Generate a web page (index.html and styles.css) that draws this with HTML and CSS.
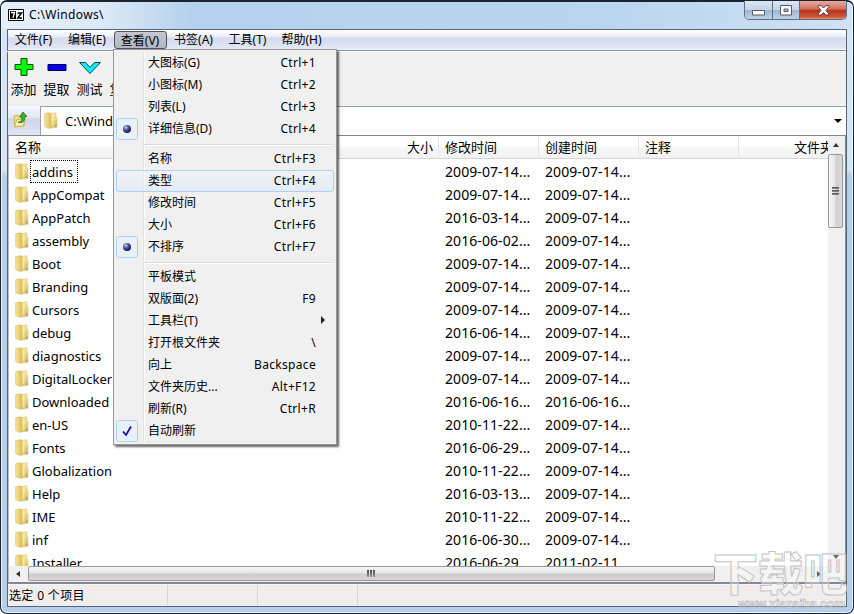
FILE: index.html
```
<!DOCTYPE html>
<html lang="zh-CN">

<head>
    <meta charset="UTF-8">
    <meta name="viewport" content="width=device-width, initial-scale=1.0">
    <title>C:\Windows\</title>
    <link rel="stylesheet" href="styles.css">
</head>

<body>
    <!-- shared icons -->
    <svg class="defs" width="0" height="0">
        <defs>
            <linearGradient id="gFront" x1="0" y1="0" x2="1" y2="0">
                <stop offset="0" stop-color="#f7e7a0" />
                <stop offset="1" stop-color="#dfbc50" />
            </linearGradient>
            <linearGradient id="gBack" x1="0" y1="0" x2="0" y2="1">
                <stop offset="0" stop-color="#f6eaa9" />
                <stop offset="1" stop-color="#d9b84c" />
            </linearGradient>
            <radialGradient id="gDot" cx=".35" cy=".3" r=".7">
                <stop offset="0" stop-color="#c9cdf5" />
                <stop offset=".5" stop-color="#4a4fa0" />
                <stop offset="1" stop-color="#15174f" />
            </radialGradient>
            <symbol id="folder" viewBox="0 0 14 17">
                <path d="M6 1.500 12 .8V5l1 1v9.300L6 16z" fill="url(#gBack)" stroke="#d8c47a" stroke-width=".6" />
                <path d="M.7 1.800 5 .7 6.800 1.500V15.800L5 16.500.7 14.500z" fill="url(#gFront)" stroke="#d5bb62" stroke-width=".6" />
                <path d="M7.500 3.500h2v11h-2z" fill="#fdf6cf" opacity=".6" />
                <path d="M11.900 12.500v2.500" stroke="#62a8c8" />
            </symbol>
        </defs>
    </svg>

    <div class="window">
        <div class="titlebar">
            <svg class="app-icon" width="16" height="12" viewBox="0 0 16 12">
                <path d="M.5.5h15v11H.5z" fill="#fff" stroke="#000" />
                <path d="M2 2h6v8H2z" fill="#000" />
                <path d="M3 3.500h3.500L5 9" fill="none" stroke="#fff" stroke-width="1.300" />
                <path d="M9.500 4h4L9.800 9H14" fill="none" stroke="#000" stroke-width="1.500" />
            </svg>
            <span class="title">C:\Windows\</span>
            <div class="win-buttons">
                <div class="win-btn min">
                    <svg width="13" height="6" viewBox="0 0 13 6"><path d="M.5.5h12v4.500H.5z" fill="#fff" stroke="#545b6b" /></svg>
                </div>
                <div class="win-btn max">
                    <svg width="12" height="11" viewBox="0 0 12 11"><path d="M.5.5h11v9.500H.5zM4 4v2.500h4V4z" fill="#fff" fill-rule="evenodd" stroke="#545b6b" /></svg>
                </div>
                <div class="win-btn close">
                    <svg width="13" height="11" viewBox="0 0 13 11"><path d="M1 .7h3.200L6.500 3 8.800.7H12v1L9 5.300l3 3.700v1H8.800L6.500 7.600 4.200 10H1V9l3-3.700L1 1.700z" fill="#fff" stroke="#6b3b40" /></svg>
                </div>
            </div>
        </div>

        <div class="client">
            <div class="menubar">
                <span class="menu">文件(F)</span>
                <span class="menu">编辑(E)</span>
                <span class="menu open">查看(V)</span>
                <span class="menu">书签(A)</span>
                <span class="menu">工具(T)</span>
                <span class="menu">帮助(H)</span>
            </div>

            <div class="toolbar">
                <div class="tool">
                    <svg width="22" height="22" viewBox="0 0 22 22"><path d="M8 2.500h6v6h6v5h-6v6H8v-6H2v-5h6z" fill="#00ff00" stroke="#004d00" /></svg>
                    <span>添加</span>
                </div>
                <div class="tool">
                    <svg width="22" height="22" viewBox="0 0 22 22"><path d="M2 8.500h18v6H2z" fill="#0000f0" stroke="#00004d" /></svg>
                    <span>提取</span>
                </div>
                <div class="tool">
                    <svg width="24" height="22" viewBox="0 0 24 22"><path d="M1.500 6.500h6l4.500 5 4.500-5h6L12 17.500z" fill="#00f4ff" stroke="#00464a" /></svg>
                    <span>测试</span>
                </div>
                <div class="tool"><span>复制</span></div>
            </div>

            <div class="address">
                <div class="up-button">
                    <svg width="16" height="17" viewBox="0 0 16 17">
                        <path d="M1 5l4-1 1 1.500h5V15L2 16z" fill="#f5df88" stroke="#c9a53c" stroke-width=".8" />
                        <path d="M1.500 15.500 4 8.500l8-1-1.500 7.500z" fill="#fbefb2" stroke="#c9a53c" stroke-width=".8" />
                        <path d="M5 11c3.500 0 4-2 3.800-5H6.500L10 1l4 4.500h-2.200C12 10 10 13 5 11z" fill="#3cb22e" stroke="#1c7a1a" stroke-width=".8" />
                    </svg>
                </div>
                <div class="combo">
                    <svg class="folder" width="14" height="17"><use href="#folder" /></svg>
                    <span>C:\Windows\</span>
                    <i class="arrow down big"></i>
                </div>
            </div>

            <div class="list">
                <div class="list-view">
                    <div class="row head">
                        <span>名称</span>
                        <span class="right">大小</span>
                        <span>修改时间</span>
                        <span>创建时间</span>
                        <span>注释</span>
                        <span class="right">文件夹</span>
                    </div>
                    <div class="rows" id="rows"></div>
                </div>
                <div class="vscroll">
                    <i class="arrow up"></i>
                    <div class="thumb"><i></i><i></i><i></i></div>
                    <i class="arrow down"></i>
                </div>
                <div class="hscroll">
                    <i class="arrow left"></i>
                    <div class="thumb"><i></i><i></i><i></i></div>
                    <i class="arrow next"></i>
                </div>
            </div>

            <div class="status">
                <span>选定 0 个项目</span>
                <span></span>
                <span></span>
                <span></span>
            </div>
        </div>
    </div>

    <div class="popup" id="popup"></div>

    <div class="watermark">
        <div class="wm-name">下载吧</div>
        <div class="wm-url">www.xiazaiba.com</div>
    </div>

    <script>
        // name, modified, created
        const FILES = [
            ['addins', '2009-07-14', '2009-07-14'],
            ['AppCompat', '2009-07-14', '2009-07-14'],
            ['AppPatch', '2016-03-14', '2009-07-14'],
            ['assembly', '2016-06-02', '2009-07-14'],
            ['Boot', '2009-07-14', '2009-07-14'],
            ['Branding', '2009-07-14', '2009-07-14'],
            ['Cursors', '2009-07-14', '2009-07-14'],
            ['debug', '2016-06-14', '2009-07-14'],
            ['diagnostics', '2009-07-14', '2009-07-14'],
            ['DigitalLocker', '2009-07-14', '2009-07-14'],
            ['Downloaded', '2016-06-16', '2016-06-16'],
            ['en-US', '2010-11-22', '2009-07-14'],
            ['Fonts', '2016-06-29', '2009-07-14'],
            ['Globalization', '2010-11-22', '2009-07-14'],
            ['Help', '2016-03-13', '2009-07-14'],
            ['IME', '2010-11-22', '2009-07-14'],
            ['inf', '2016-06-30', '2009-07-14'],
            ['Installer', '2016-06-29', '2011-02-11']
        ];
        // label, shortcut, mark; null is a separator
        const MENU = [
            ['大图标(G)', 'Ctrl+1'],
            ['小图标(M)', 'Ctrl+2'],
            ['列表(L)', 'Ctrl+3'],
            ['详细信息(D)', 'Ctrl+4', 'dot'],
            null,
            ['名称', 'Ctrl+F3'],
            ['类型', 'Ctrl+F4', 'hover'],
            ['修改时间', 'Ctrl+F5'],
            ['大小', 'Ctrl+F6'],
            ['不排序', 'Ctrl+F7', 'dot'],
            null,
            ['平板模式', ''],
            ['双版面(2)', 'F9'],
            ['工具栏(T)', '', 'sub'],
            ['打开根文件夹', '\\'],
            ['向上', 'Backspace'],
            ['文件夹历史...', 'Alt+F12'],
            ['刷新(R)', 'Ctrl+R'],
            ['自动刷新', '', 'check']
        ];
        const MARKS = {
            dot: '<b class="mark"><svg width="10" height="10"><circle cx="5" cy="5" r="4" fill="url(#gDot)"/></svg></b>',
            check: '<b class="mark"><svg width="12" height="12"><path d="M2 6.500 5 10 10 1.500" fill="none" stroke="#14149a" stroke-width="1.800"/></svg></b>',
            sub: '<i class="arrow next"></i>'
        };

        document.getElementById('rows').innerHTML = FILES.map((f, i) => `
            <div class="row">
                <span class="name"><svg class="folder" width="14" height="17"><use href="#folder"/></svg><em class="${i ? '' : 'focus'}">${f[0]}</em></span>
                <span></span>
                <span>${f[1]}...</span>
                <span>${f[2]}...</span>
            </div>`).join('');

        document.getElementById('popup').innerHTML = MENU.map(m => m
            ? `<div class="item ${m[2] || ''}">${MARKS[m[2]] || ''}<span>${m[0]}</span><kbd>${m[1]}</kbd></div>`
            : '<div class="sep"></div>').join('');
    </script>
</body>

</html>
```
FILE: styles.css
```
* {
    box-sizing: border-box;
}

body {
    margin: 0;
    background: #fff;
    font-family: "Noto Sans", "Noto Sans CJK SC", sans-serif;
    font-size: 12px;
    color: #000;
    overflow: hidden;
}

.defs {
    position: absolute;
}

.window {
    width: 854px;
    height: 614px;
    padding: 0 6px 6px;
    display: flex;
    flex-direction: column;
    border: 1px solid #1b2530;
    border-top-width: 2px;
    border-radius: 7px;
    background: linear-gradient(#d5e6f6 0, #d3e4f5 168px, #b4cfea 174px, #b5d0ed 100%);
    box-shadow: inset 0 0 0 1px #e9f4fd;
}

/* title bar */
.titlebar {
    display: flex;
    height: 27px;
    margin: 0 -5px;
    padding-left: 6px;
    border-radius: 5px 5px 0 0;
    background: linear-gradient(90deg, #e6f0fa 0, #dce9f6 100px, #b5d1ed 190px, #bad5ef 600px, #cfe1f3 100%);
}

.app-icon {
    margin: 7px 5px 0 0;
}

.title {
    line-height: 26px;
    letter-spacing: .35px;
}

.win-buttons {
    display: flex;
    height: 19px;
    margin: -1px 5px 0 auto;
    border: 1px solid #5f6f84;
    border-top: 0;
    border-radius: 0 0 5px 5px;
    overflow: hidden;
}

.win-btn {
    display: flex;
    align-items: center;
    justify-content: center;
    width: 28px;
    background: linear-gradient(#dce8f4, #c3d3e4 48%, #9fb4ca 50%, #bdd2e7);
    border-right: 1px solid #5f6f84;
}

.win-btn.min {
    padding-top: 5px;
}

.win-btn.max {
    width: 27px;
}

.win-btn.close {
    width: 46px;
    border-right: 0;
    background: linear-gradient(#e9a99c, #d0705f 46%, #b5301d 50%, #cf5a3a 90%, #e39a76);
}

/* client area */
.client {
    flex: 1;
    display: flex;
    flex-direction: column;
    min-height: 0;
    border: 1px solid #56667a;
    background: #f0f0f0;
}

.menubar {
    display: flex;
    flex: none;
    height: 21px;
    border-bottom: 1px solid #8f949c;
    background: linear-gradient(#fff, #eef1f9 30%, #d5daee 42%, #e2e6f5 90%, #f5f6fb);
}

.menu {
    width: 53px;
    margin-top: 1px;
    height: 18px;
    line-height: 18px;
    text-align: center;
    white-space: nowrap;
}

.menu:first-child {
    text-indent: -2px;
}

.menu:nth-child(2) {
    text-indent: -1px;
}

.menu:nth-child(n+4) {
    width: 54px;
    text-indent: -1px;
}

.menu.open {
    height: 18px;
    line-height: 17px;
    text-indent: -1px;
    border: 1px solid #4f5560;
    border-radius: 3px;
    background: linear-gradient(#c5c8d1, #b3b7c3);
}

.toolbar {
    display: flex;
    flex: none;
    height: 55px;
    margin-left: -1px;
    border-top: 1px solid #fff;
}

.tool {
    width: 33px;
    padding-top: 4px;
    display: flex;
    flex-direction: column;
    align-items: center;
    justify-content: space-between;
    height: 46px;
    white-space: nowrap;
    font-size: 13px;
    line-height: 18px;
}

.tool:last-child {
    justify-content: flex-end;
}

.address {
    display: flex;
    flex: none;
    height: 29px;
}

.up-button {
    width: 32px;
    padding: 5px 0 0 5px;
    background: linear-gradient(#f6f8fc, #e1e6f4 40%, #cfd6eb 45%, #e0e4f3);
}

.combo {
    flex: 1;
    display: flex;
    align-items: center;
    padding: 0 4px;
    border: 1px solid #9a9fa8;
    border-width: 1px 0 0 1px;
    background: #fff;
    font-size: 13px;
}

.combo .folder {
    margin: -1px 0 0 -1px;
}

.combo span {
    margin-left: 7px;
}

.combo .arrow {
    margin-left: auto;
}

/* small triangles */
.arrow {
    width: 0;
    height: 0;
    flex: none;
    border: 3px solid transparent;
}

.arrow.up {
    border-bottom: 4px solid #333;
    border-top: 0;
}

.arrow.down {
    border-top: 4px solid #333;
    border-bottom: 0;
}

.arrow.down.big {
    border-width: 4px 4px 0;
    border-top-color: #000;
}

.arrow.left {
    border-right: 4px solid #333;
    border-left: 0;
}

.arrow.next {
    border-left: 4px solid #222;
    border-right: 0;
}

/* file list */
.list {
    display: grid;
    grid-template-columns: 1fr 17px;
    grid-template-rows: 430px 16px;
    flex: none;
    height: 449px;
    border: 1px solid #828790;
    border-width: 1px 1px 2px;
    border-left-color: #b9bcc2;
    background: #fff;
}

.list-view {
    overflow: hidden;
}

.row {
    display: grid;
    height: 23px;
    line-height: 22px;
    font-size: 14px;
    letter-spacing: .08px;
    white-space: nowrap;
}

.rows .row {
    grid-template-columns: 330px 100px 100px 100px;
}

.rows {
    padding-top: 2px;
}

.row > span {
    padding-left: 6px;
}

.row.head {
    grid-template-columns: 330px 100px 100px 100px 100px 100px;
    height: 23px;
    line-height: 23px;
    font-size: 13px;
    letter-spacing: 0;
    border-bottom: 1px solid #d5d5d5;
    background: linear-gradient(#fff 45%, #f5f6f8 55%, #f1f2f4);
}

.row.head > span {
    border-right: 1px solid #e2e3ea;
}

.row.head .right {
    text-align: right;
    padding-right: 5px;
}

.row .name {
    display: flex;
}

.row .folder {
    margin: 2px 1px 0 0;
}

.row em {
    height: 23px;
    padding: 0 2px;
    font-style: normal;
    font-size: 13px;
    letter-spacing: 0;
}

.row em.focus {
    margin-top: -1px;
    padding: 0 4px 0 1px;
    border: 1px dotted #000;
}

.vscroll {
    display: flex;
    flex-direction: column;
    align-items: center;
    padding: 7px 2px 7px 0;
    background: #f0f0f0;
}

.vscroll .arrow.down {
    margin-top: auto;
}

.vscroll .thumb {
    width: 15px;
    height: 74px;
    margin-top: 7px;
    flex-direction: column;
    background: linear-gradient(90deg, #f6f6f6, #e6e6e6 48%, #cfcfcf 52%, #dadada);
}

.thumb {
    display: flex;
    flex: none;
    align-items: center;
    justify-content: center;
    gap: 1px;
    border: 1px solid #979797;
    border-radius: 2px;
}

.thumb i {
    background: linear-gradient(#444, #999);
}

.vscroll .thumb i {
    width: 7px;
    height: 2px;
}

.hscroll {
    grid-column: 1 / 3;
    display: flex;
    align-items: center;
    padding: 0 24px 1px 7px;
    background: #f0f0f0;
}

.hscroll .thumb {
    width: 687px;
    height: 15px;
    margin-left: 8px;
    padding-right: 2px;
    background: linear-gradient(#f6f6f6, #e4e4e4 48%, #cdcdcd 52%, #d6d6d6);
}

.hscroll .thumb i {
    width: 2px;
    height: 7px;
}

.hscroll .arrow.next {
    margin-left: auto;
}

.status {
    display: flex;
    flex: 1;
    border-top: 1px solid #f8f6f6;
    background: #f1eded;
}

.status span {
    width: 90px;
    height: 20px;
    line-height: 21px;
    letter-spacing: .35px;
    border-right: 1px solid #d7d3d3;
}

.status span:first-child {
    width: 160px;
    padding-left: 1px;
}

.status span:nth-child(3) {
    width: 100px;
}

.status span:last-child {
    border: 0;
}

/* open menu, lies over the window */
.popup {
    position: absolute;
    left: 113px;
    top: 49px;
    width: 224px;
    height: 396px;
    padding: 2px;
    border: 1px solid #979797;
    background: linear-gradient(90deg, #f0f0f0 27px, #e2e3e3 27px, #e2e3e3 28px, #fff 28px, #fff 29px, #f0f0f0 29px) 2px 2px / 218px 390px no-repeat #f0f0f0;
    box-shadow: 2px 2px 2px rgba(0, 0, 0, .6);
}

.item {
    position: relative;
    display: flex;
    justify-content: space-between;
    height: 22px;
    padding: 0 18px 0 32px;
    line-height: 21px;
}

.item kbd {
    font: inherit;
    letter-spacing: .32px;
}

.item.hover {
    padding: 0 17px 0 31px;
    line-height: 19px;
    border: 1px solid #aecff7;
    border-radius: 3px;
    background: linear-gradient(rgba(240, 244, 250, .6), rgba(222, 233, 248, .6));
}

.item .arrow {
    position: absolute;
    right: 9px;
    top: 6px;
    border-width: 4px 0 4px 4px;
}

.mark {
    position: absolute;
    left: 0;
    top: 0;
    width: 22px;
    height: 22px;
    display: flex;
    align-items: center;
    justify-content: center;
    border: 1px solid #aecff7;
    border-radius: 3px;
    background: #e9f0f9;
}

.sep {
    height: 8px;
    margin-left: 28px;
    background: linear-gradient(transparent 4px, #dcdcdc 4px, #dcdcdc 5px, #fff 5px, #fff 6px, transparent 6px);
}

.watermark {
    position: absolute;
    left: 713px;
    top: 547px;
    width: 136px;
    height: 66px;
    font-weight: 900;
    color: rgba(255, 255, 255, .3);
    white-space: nowrap;
}

.wm-name {
    font-size: 45px;
    line-height: 54px;
    -webkit-text-stroke: 1px #c4c4c4;
}

.wm-url {
    position: absolute;
    left: 25px;
    top: 50px;
    font: bold 12px/14px "Liberation Sans", sans-serif;
    letter-spacing: .1px;
    -webkit-text-stroke: .6px #b0b4ba;
}
```
